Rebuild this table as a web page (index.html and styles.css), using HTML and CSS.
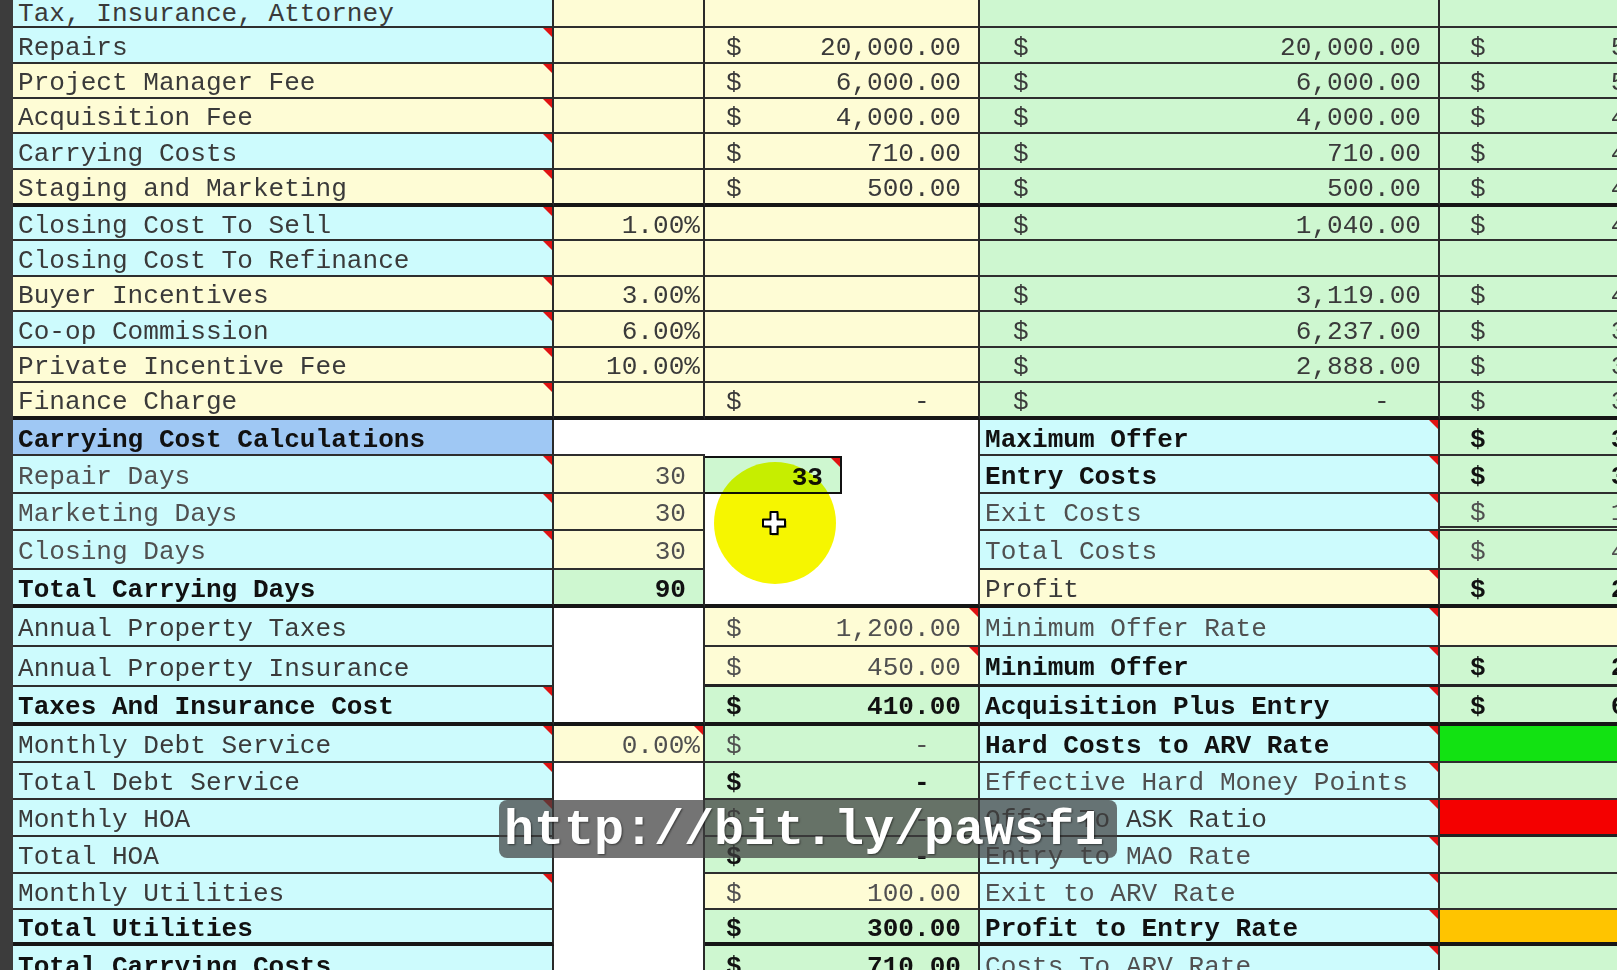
FILE: index.html
```html
<!DOCTYPE html>
<html>
<head>
<meta charset="utf-8">
<title>Carrying Cost Calculations</title>
<link rel="stylesheet" href="styles.css">
</head>
<body>
<div class="screen">
  <div class="strip"></div>
  <div class="sheet">
    <div class="row h36 first">
      <div class="c a cy">Tax, Insurance, Attorney</div>
      <div class="c b ye"></div>
      <div class="c cc ye"></div>
      <div class="c d gr"></div>
      <div class="c e gr"></div>
    </div>
    <div class="row h36">
      <div class="c a cy t">Repairs</div>
      <div class="c b ye"></div>
      <div class="c cc ye m"><span>$</span><span>20,000.00</span></div>
      <div class="c d gr m"><span>$</span><span>20,000.00</span></div>
      <div class="c e gr"><span>$</span><span class="ed">5</span></div>
    </div>
    <div class="row h35">
      <div class="c a ye t">Project Manager Fee</div>
      <div class="c b ye"></div>
      <div class="c cc ye m"><span>$</span><span>6,000.00</span></div>
      <div class="c d gr m"><span>$</span><span>6,000.00</span></div>
      <div class="c e gr"><span>$</span><span class="ed">5</span></div>
    </div>
    <div class="row h35">
      <div class="c a ye t">Acquisition Fee</div>
      <div class="c b ye"></div>
      <div class="c cc ye m"><span>$</span><span>4,000.00</span></div>
      <div class="c d gr m"><span>$</span><span>4,000.00</span></div>
      <div class="c e gr"><span>$</span><span class="ed">4</span></div>
    </div>
    <div class="row h36">
      <div class="c a cy t">Carrying Costs</div>
      <div class="c b ye"></div>
      <div class="c cc ye m"><span>$</span><span>710.00</span></div>
      <div class="c d gr m"><span>$</span><span>710.00</span></div>
      <div class="c e gr"><span>$</span><span class="ed">4</span></div>
    </div>
    <div class="row h37 tk">
      <div class="c a ye t">Staging and Marketing</div>
      <div class="c b ye"></div>
      <div class="c cc ye m"><span>$</span><span>500.00</span></div>
      <div class="c d gr m"><span>$</span><span>500.00</span></div>
      <div class="c e gr"><span>$</span><span class="ed">4</span></div>
    </div>
    <div class="row h34">
      <div class="c a cy t">Closing Cost To Sell</div>
      <div class="c b ye pct">1.00%</div>
      <div class="c cc ye"></div>
      <div class="c d gr m"><span>$</span><span>1,040.00</span></div>
      <div class="c e gr"><span>$</span><span class="ed">4</span></div>
    </div>
    <div class="row h36">
      <div class="c a cy t">Closing Cost To Refinance</div>
      <div class="c b ye"></div>
      <div class="c cc ye"></div>
      <div class="c d gr"></div>
      <div class="c e gr"></div>
    </div>
    <div class="row h35">
      <div class="c a ye t">Buyer Incentives</div>
      <div class="c b ye pct">3.00%</div>
      <div class="c cc ye"></div>
      <div class="c d gr m"><span>$</span><span>3,119.00</span></div>
      <div class="c e gr"><span>$</span><span class="ed">4</span></div>
    </div>
    <div class="row h36">
      <div class="c a cy t">Co-op Commission</div>
      <div class="c b ye pct">6.00%</div>
      <div class="c cc ye"></div>
      <div class="c d gr m"><span>$</span><span>6,237.00</span></div>
      <div class="c e gr"><span>$</span><span class="ed">3</span></div>
    </div>
    <div class="row h35">
      <div class="c a ye t">Private Incentive Fee</div>
      <div class="c b ye pct">10.00%</div>
      <div class="c cc ye"></div>
      <div class="c d gr m"><span>$</span><span>2,888.00</span></div>
      <div class="c e gr"><span>$</span><span class="ed">3</span></div>
    </div>
    <div class="row h37 tk">
      <div class="c a ye t">Finance Charge</div>
      <div class="c b ye"></div>
      <div class="c cc ye m"><span>$</span><span class="dash">-</span></div>
      <div class="c d gr m"><span>$</span><span class="dash">-</span></div>
      <div class="c e gr"><span>$</span><span class="ed">3</span></div>
    </div>

    <div class="row h36">
      <div class="c a bl bold">Carrying Cost Calculations</div>
      <div class="c b wh nr"></div>
      <div class="c cc wh nb"></div>
      <div class="c d cy bold t">Maximum Offer</div>
      <div class="c e gr bold"><span>$</span><span class="ed">3</span></div>
    </div>
    <div class="row h38">
      <div class="c a cy t dim">Repair Days</div>
      <div class="c b ye int dim">30</div>
      <div class="c c1 gr int bold sel t">33</div>
      <div class="c c2 wh nb"></div>
      <div class="c d cy bold t">Entry Costs</div>
      <div class="c e gr bold"><span>$</span><span class="ed">3</span></div>
    </div>
    <div class="row h37">
      <div class="c a cy t dim">Marketing Days</div>
      <div class="c b ye int dim">30</div>
      <div class="c cc wh nb"></div>
      <div class="c d cy t dim">Exit Costs</div>
      <div class="c e gr dbl dim"><span>$</span><span class="ed">1</span></div>
    </div>
    <div class="row h39">
      <div class="c a cy t dim">Closing Days</div>
      <div class="c b ye int dim">30</div>
      <div class="c cc wh nb"></div>
      <div class="c d cy t dim">Total Costs</div>
      <div class="c e gr dim"><span>$</span><span class="ed">4</span></div>
    </div>
    <div class="row h38 tk">
      <div class="c a cy bold">Total Carrying Days</div>
      <div class="c b gr int bold">90</div>
      <div class="c cc wh"></div>
      <div class="c d ye t">Profit</div>
      <div class="c e gr bold"><span>$</span><span class="ed">2</span></div>
    </div>
    <div class="row h39">
      <div class="c a cy">Annual Property Taxes</div>
      <div class="c b wh nb"></div>
      <div class="c cc ye m t dim"><span>$</span><span>1,200.00</span></div>
      <div class="c d cy t dim">Minimum Offer Rate</div>
      <div class="c e ye"></div>
    </div>
    <div class="row h40">
      <div class="c a cy">Annual Property Insurance</div>
      <div class="c b wh nb"></div>
      <div class="c cc ye m t dim mid"><span>$</span><span>450.00</span></div>
      <div class="c d cy bold t mid">Minimum Offer</div>
      <div class="c e gr bold mid"><span>$</span><span class="ed">2</span></div>
    </div>
    <div class="row h39 tk">
      <div class="c a cy bold t">Taxes And Insurance Cost</div>
      <div class="c b wh"></div>
      <div class="c cc gr m bold"><span>$</span><span>410.00</span></div>
      <div class="c d cy bold t">Acquisition Plus Entry</div>
      <div class="c e gr bold"><span>$</span><span class="ed">6</span></div>
    </div>
    <div class="row h37">
      <div class="c a cy t">Monthly Debt Service</div>
      <div class="c b ye pct t dim">0.00%</div>
      <div class="c cc gr m dim"><span>$</span><span class="dash">-</span></div>
      <div class="c d cy bold t">Hard Costs to ARV Rate</div>
      <div class="c e lime"></div>
    </div>
    <div class="row h37">
      <div class="c a cy t">Total Debt Service</div>
      <div class="c b wh nb"></div>
      <div class="c cc gr m bold"><span>$</span><span class="dash">-</span></div>
      <div class="c d cy t dim">Effective Hard Money Points</div>
      <div class="c e gr"></div>
    </div>
    <div class="row h37">
      <div class="c a cy t">Monthly HOA</div>
      <div class="c b wh nb"></div>
      <div class="c cc gr m"><span>$</span><span class="dash">-</span></div>
      <div class="c d cy t">Offer To ASK Ratio</div>
      <div class="c e red mid"></div>
    </div>
    <div class="row h37">
      <div class="c a cy">Total HOA</div>
      <div class="c b wh nb"></div>
      <div class="c cc gr m bold"><span>$</span><span class="dash">-</span></div>
      <div class="c d cy t dim">Entry to MAO Rate</div>
      <div class="c e gr"></div>
    </div>
    <div class="row h36">
      <div class="c a cy t">Monthly Utilities</div>
      <div class="c b wh nb"></div>
      <div class="c cc ye m dim"><span>$</span><span>100.00</span></div>
      <div class="c d cy t dim">Exit to ARV Rate</div>
      <div class="c e gr"></div>
    </div>
    <div class="row h36 tk">
      <div class="c a cy bold">Total Utilities</div>
      <div class="c b wh nb"></div>
      <div class="c cc gr m bold"><span>$</span><span>300.00</span></div>
      <div class="c d cy bold t">Profit to Entry Rate</div>
      <div class="c e org"></div>
    </div>
    <div class="row h38">
      <div class="c a cy bold">Total Carrying Costs</div>
      <div class="c b wh nb"></div>
      <div class="c cc gr m bold"><span>$</span><span>710.00</span></div>
      <div class="c d cy t dim">Costs To ARV Rate</div>
      <div class="c e gr"></div>
    </div>
  </div>

  <div class="spot"></div>
  <svg class="cursor" width="26" height="26" viewBox="0 0 26 26" aria-hidden="true">
    <path d="M9.5 2h7v7.5h7.5v7h-7.5v7.5h-7v-7.5H2v-7h7.5z" fill="#000" opacity=".35" transform="translate(1.5 1.5)"/>
    <path d="M9.5 2h7v7.5h7.5v7h-7.5v7.5h-7v-7.5H2v-7h7.5z" fill="#fff" stroke="#000" stroke-width="2" stroke-linejoin="round"/>
  </svg>
  <div class="banner">http://bit.ly/pawsf1</div>
</div>
</body>
</html>
```

FILE: styles.css
```css
* {
  box-sizing: border-box;
  margin: 0;
  padding: 0;
}

html,
body {
  width: 1617px;
  height: 970px;
  overflow: hidden;
  background: #ffffff;
}

body {
  font-family: "Liberation Mono", "Courier New", monospace;
  font-size: 26.1px;
  color: #3a3a3a;
}

.screen {
  position: relative;
  display: flex;
  width: 1617px;
  height: 970px;
  overflow: hidden;
  isolation: isolate;
}

.strip {
  flex: none;
  width: 13px;
  background: #3c3c3c;
}

.sheet {
  flex: none;
  width: 1727px;
  margin-top: -8px;
  display: flex;
  flex-direction: column;
}

.row {
  flex: none;
  display: grid;
  grid-template-columns: 541px 151px 137px 138px 460px 300px;
}

.h34 { height: 34px; }
.h35 { height: 35px; }
.h36 { height: 36px; }
.h37 { height: 37px; }
.h38 { height: 38px; }
.h39 { height: 39px; }
.h40 { height: 40px; }

.c {
  position: relative;
  display: flex;
  align-items: center;
  padding-top: 5px;
  white-space: nowrap;
  overflow: hidden;
  border-bottom: 2px solid #2e2e2e;
  border-right: 2px solid #2a2a2a;
}

.first > .c {
  padding-top: 9px;
}

.tk > .c {
  border-bottom: 4px solid #161616;
}

.mid.c {
  border-bottom: 3px solid #222222;
}

.row .c.nb {
  border-bottom: 0;
}

.row .c.nr {
  border-right: 0;
}

.row .c.dbl {
  border-bottom: 5px double #2e2e2e;
}

/* columns */
.a {
  padding-left: 5px;
}

.cc {
  grid-column: span 2;
}

.e {
  border-right: 0;
  padding-left: 30px;
}

.ed {
  margin-left: 125px;
}

/* content alignment */
.m {
  justify-content: space-between;
}

.cc.m {
  padding-left: 21px;
  padding-right: 17px;
}

.d.m {
  padding-left: 33px;
  padding-right: 17px;
}

.d:not(.m) {
  padding-left: 5px;
}

.dash {
  margin-right: 2ch;
}

.pct {
  justify-content: flex-end;
  padding-right: 3px;
}

.int {
  justify-content: flex-end;
  padding-right: 17px;
}

.sel {
  border: 2px solid #111111;
  border-left: 0;
}

/* backgrounds */
.cy { background: #cdfbfd; }
.ye { background: #fefcd5; }
.gr { background: #cef7d0; }
.bl { background: #9fc8f4; }
.wh { background: #ffffff; }
.lime { background: #12e212; }
.red { background: #f40000; }
.org { background: #ffc400; }

/* text */
.bold {
  font-weight: bold;
  color: #111111;
}

.dim {
  color: #505050;
}

.bold.dim {
  color: #111111;
}

/* comment indicators */
.t::after {
  content: "";
  position: absolute;
  top: 0;
  right: 0;
  width: 0;
  height: 0;
  border-style: solid;
  border-width: 0 9px 9px 0;
  border-color: transparent #e01212 transparent transparent;
}

/* overlays */
.spot {
  position: absolute;
  left: 714px;
  top: 462px;
  width: 122px;
  height: 122px;
  border-radius: 50%;
  background: radial-gradient(circle, #f6f600 0, #f6f600 86%, rgba(246, 246, 0, 0) 100%);
  mix-blend-mode: multiply;
}

.cursor {
  position: absolute;
  left: 761px;
  top: 510px;
}

.banner {
  position: absolute;
  left: 499px;
  top: 800px;
  width: 618px;
  height: 58px;
  padding-left: 5px;
  padding-top: 3px;
  display: flex;
  align-items: center;
  border-radius: 8px;
  background: rgba(62, 62, 62, 0.72);
  color: #ffffff;
  font-weight: bold;
  font-size: 50px;
  line-height: 55px;
  text-shadow: 1px 1px 2px rgba(0, 0, 0, 0.5);
}
```
